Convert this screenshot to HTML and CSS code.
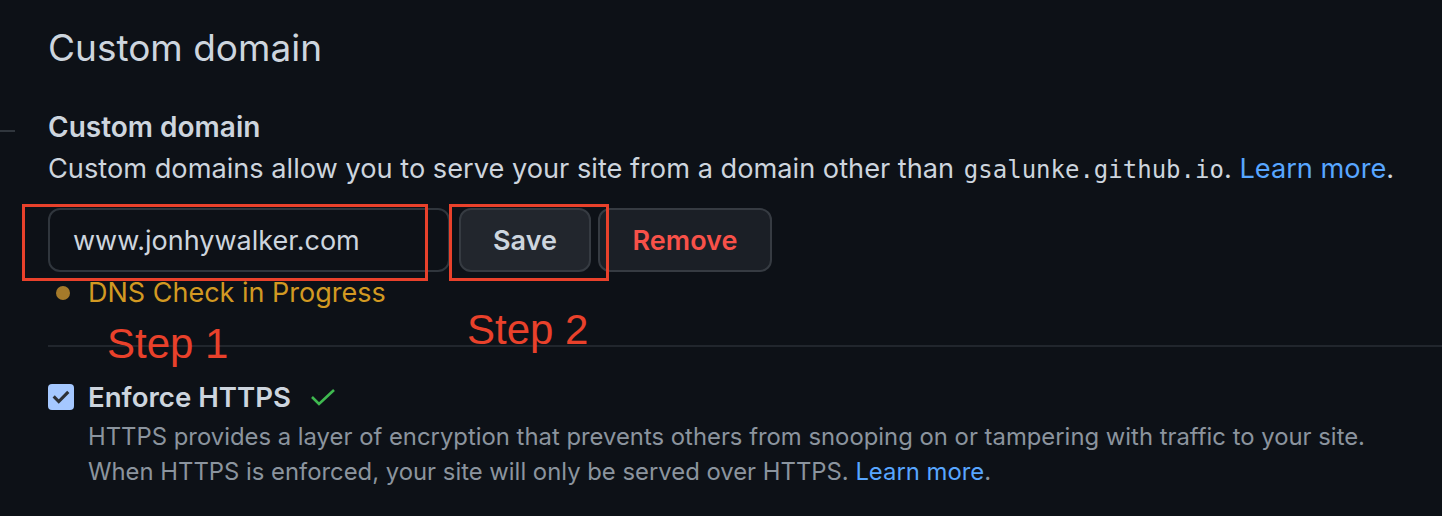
FILE: index.html
```html
<!DOCTYPE html>
<html lang="en">
<head>
  <meta charset="UTF-8">
  <title>Pages settings - Custom domain</title>
  <link rel="stylesheet" href="styles.css">
</head>
<body>

  <div class="sidebar-edge"></div>

  <main class="settings">
    <h1 class="subhead">Custom domain</h1>

    <section class="domain">
      <h2 class="field-label">Custom domain</h2>
      <p class="field-note">Custom domains allow you to serve your site from a domain other than <code>gsalunke.github.io</code>. <a href="#">Learn more</a>.</p>

      <form class="domain-form" onsubmit="return false">
        <input type="text" class="domain-input" value="www.jonhywalker.com">
        <button class="btn btn-save">Save</button>
        <button class="btn btn-danger">Remove</button>
      </form>

      <div class="dns-status"><span class="dot"></span>DNS Check in Progress</div>
    </section>

    <section class="https">
      <div class="https-row">
        <span class="checkbox">
          <svg width="18" height="18" viewBox="0 0 16 16"><path d="M2.5 8.5l3.5 3.5 7.5-7.5" fill="none" stroke="#2d3034" stroke-width="2.8" stroke-linecap="square"/></svg>
        </span>
        <span class="https-title">Enforce HTTPS</span>
        <svg class="ok" width="26" height="18" viewBox="0 0 26 18"><path d="M2 9l7 7L24 2" fill="none" stroke="#3fb950" stroke-width="2.6"/></svg>
      </div>
      <p class="https-note">HTTPS provides a layer of encryption that prevents others from snooping on or tampering with traffic to your site.<br>When HTTPS is enforced, your site will only be served over HTTPS. <a href="#">Learn more</a>.</p>
    </section>
  </main>

  <!-- annotations drawn over the screenshot -->
  <div class="mark mark-input"></div>
  <div class="mark mark-save"></div>
  <div class="step step-1">Step 1</div>
  <div class="step step-2">Step 2</div>

</body>
</html>
```

FILE: styles.css
```css
body {
  margin: 0;
  background-color: #0d1117;
  color: #cdd5de;
  font-family: Inter, "Noto Sans", sans-serif;
  overflow: hidden;
}
a {
  color: #58a6ff;
  text-decoration: none;
}
.sidebar-edge {
  position: absolute;
  top: 130px;
  left: 0;
  width: 15px;
  height: 2px;
  background-color: #30363d;
}
.settings {
  padding-left: 48px;
}
.subhead {
  margin: 0;
  padding-top: 23px;
  font-size: 37px;
  font-weight: 400;
  line-height: 50px;
}
.field-label {
  margin: 36px 0 0;
  font-size: 28px;
  font-weight: 600;
  line-height: 36px;
}
.field-note {
  margin: 6px 0 0;
  font-size: 27.2px;
  line-height: 36px;
}
code {
  margin-left: 2px;
  font-family: "DejaVu Sans Mono", "Liberation Mono", monospace;
  font-size: 24px;
}
.domain-form {
  display: flex;
  margin-top: 20px;
}
.domain-input {
  box-sizing: border-box;
  width: 402px;
  height: 64px;
  padding: 0 0 0 23px;
  border: 2px solid #30363d;
  border-radius: 12px;
  background-color: #0d1117;
  color: #cdd5de;
  font-family: inherit;
  font-size: 27px;
}
.btn {
  box-sizing: border-box;
  height: 64px;
  border: 2px solid #363b42;
  border-radius: 12px;
  background-color: #22262d;
  color: #cdd5de;
  font-family: inherit;
  font-size: 27px;
  font-weight: 600;
}
.btn-save {
  width: 132px;
  margin-left: 9px;
}
.btn-danger {
  width: 174px;
  margin-left: 7px;
  background-color: #1b1f26;
  color: #f85149;
}
.dns-status {
  display: flex;
  align-items: center;
  margin-top: 4px;
  padding-left: 8px;
  color: #d29922;
  font-size: 27px;
  line-height: 34px;
}
.dot {
  width: 14px;
  height: 14px;
  margin-right: 18px;
  border-radius: 50%;
  background-color: #a57a2a;
}
.https {
  margin-top: 35px;
  padding-top: 35px;
  border-top: 2px solid #21262d;
}
.https-row {
  display: flex;
  align-items: center;
}
.checkbox {
  display: flex;
  align-items: center;
  justify-content: center;
  width: 26px;
  height: 26px;
  margin-right: 14px;
  border-radius: 4px;
  background-color: #a5c8ff;
}
.https-title {
  font-size: 27.6px;
  font-weight: 600;
  line-height: 30px;
}
.ok {
  margin-left: 19px;
}
.https-note {
  margin: 7px 0 0 40px;
  color: #8b949e;
  font-size: 23.85px;
  line-height: 35px;
}
.mark {
  position: absolute;
  top: 204px;
  height: 77px;
  box-sizing: border-box;
  border: 3px solid #e9412b;
}
.mark-input {
  left: 22px;
  width: 406px;
}
.mark-save {
  left: 449px;
  width: 160px;
}
.step {
  position: absolute;
  color: #e9412b;
  font-family: "Liberation Sans", Arial, sans-serif;
  font-size: 42px;
  line-height: 1;
}
.step-1 {
  left: 107px;
  top: 323px;
}
.step-2 {
  left: 467px;
  top: 309px;
}
```
